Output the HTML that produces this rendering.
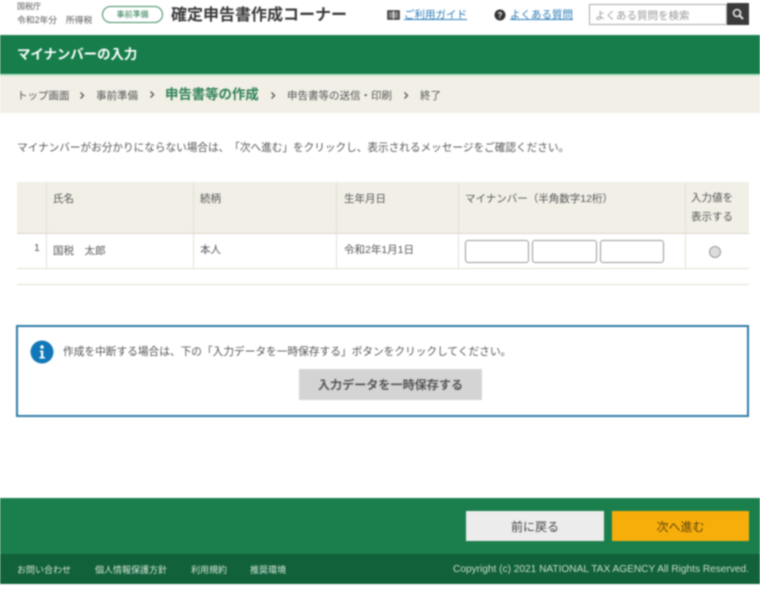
<!DOCTYPE html>
<html lang="ja">
<head>
<meta charset="utf-8">
<title>マイナンバーの入力</title>
<style>
html,body{margin:0;padding:0;background:#fff}
#p{position:relative;width:760px;height:591px;overflow:hidden;background:#fff;font-family:"Liberation Sans","Noto Sans CJK JP",sans-serif;color:#444;filter:blur(.9px);text-spacing-trim:space-all}
#p div{position:absolute;white-space:nowrap}
#p svg{position:absolute}
.t{line-height:1}
.b{background:#e3e0d6}
.c{fill:none;stroke:#555;stroke-width:1.300}
</style>
</head>
<body>
<div id="p">
<!-- header -->
<div class="t" style="left:17px;top:3px;font-size:8px;color:#555">国税庁</div>
<div class="t" style="left:17px;top:16px;font-size:8.800px;color:#555">令和2年分　所得税</div>
<div class="t" style="left:102px;top:6px;width:59px;height:15px;border:1px solid #3d8a60;border-radius:9px;text-align:center;font-size:8px;line-height:15px;color:#2a7a50">事前準備</div>
<div class="t" style="left:171px;top:8px;font-size:16px;font-weight:700;color:#3a3a3a">確定申告書作成コーナー</div>
<svg style="left:387px;top:10px" width="13" height="11" viewBox="0 0 13 11"><path d="M1 1h11v8H1z" fill="#888" stroke="#333" stroke-width="1.500"/><path d="M6.500 1v8" stroke="#fff" stroke-width="1"/></svg>
<div class="t" style="left:404px;top:10px;font-size:10.500px;color:#2b7cb8;text-decoration:underline">ご利用ガイド</div>
<svg style="left:494px;top:9px" width="12" height="12" viewBox="0 0 12 12"><circle cx="6" cy="6" r="5.500" fill="#333"/><text x="6" y="9" font-size="8" font-weight="700" text-anchor="middle" fill="#fff" font-family="Liberation Sans">?</text></svg>
<div class="t" style="left:510px;top:10px;font-size:10.500px;color:#2b7cb8;text-decoration:underline">よくある質問</div>
<div class="t" style="left:589px;top:4px;width:136px;height:19px;border:1px solid #aaa;background:#fff;font-size:10.500px;line-height:22px;color:#999;text-indent:5px">よくある質問を検索</div>
<div style="left:727px;top:3px;width:22px;height:22px;background:#3a3a3a"></div>
<svg style="left:731px;top:7px" width="14" height="14" viewBox="0 0 14 14"><circle cx="6" cy="6" r="3.500" fill="none" stroke="#e8e8e8" stroke-width="1.600"/><path d="M8.600 8.600L12 12" stroke="#e8e8e8" stroke-width="2"/></svg>

<!-- title band -->
<div style="left:0;top:35px;width:760px;height:40px;background:#177e4b"></div>
<div style="left:0;top:74px;width:760px;height:2px;background:#bfe6cb"></div>
<div class="t" style="left:17px;top:48px;font-size:13.400px;font-weight:700;color:#fff">マイナンバーの入力</div>

<!-- breadcrumb -->
<div style="left:0;top:76px;width:760px;height:37px;background:#f1efe6"></div>
<div class="t" style="left:17px;top:91px;font-size:10.500px;color:#555">トップ画面</div>
<svg style="left:79px;top:91px" width="6" height="9" viewBox="0 0 6 9"><path class="c" d="M1.500 1.500L4.500 4.500L1.500 7.500"/></svg>
<div class="t" style="left:96px;top:91px;font-size:10.500px;color:#555">事前準備</div>
<svg style="left:149px;top:90px" width="6" height="9" viewBox="0 0 6 9"><path class="c" d="M1.500 1.500L4.500 4.500L1.500 7.500"/></svg>
<div class="t" style="left:165px;top:88px;font-size:13.400px;font-weight:700;color:#2f8258">申告書等の作成</div>
<svg style="left:270px;top:91px" width="6" height="9" viewBox="0 0 6 9"><path class="c" d="M1.500 1.500L4.500 4.500L1.500 7.500"/></svg>
<div class="t" style="left:287px;top:91px;font-size:10.500px;color:#555">申告書等の送信・印刷</div>
<svg style="left:403px;top:91px" width="6" height="9" viewBox="0 0 6 9"><path class="c" d="M1.500 1.500L4.500 4.500L1.500 7.500"/></svg>
<div class="t" style="left:420px;top:91px;font-size:10.500px;color:#555">終了</div>

<!-- lead -->
<div class="t" style="left:17px;top:143px;font-size:10.640px;color:#555">マイナンバーがお分かりにならない場合は、「次へ進む」をクリックし、表示されるメッセージをご確認ください。</div>

<!-- table -->
<div style="left:17px;top:182px;width:732px;height:51px;background:#f1efe6"></div>
<div style="left:17px;top:233px;width:732px;height:1px;background:#d9d7cc"></div>
<div class="b" style="left:17px;top:268px;width:732px;height:1px"></div>
<div class="b" style="left:17px;top:284px;width:732px;height:1px"></div>
<div class="b" style="left:46px;top:182px;width:1px;height:87px"></div>
<div class="b" style="left:193px;top:182px;width:1px;height:87px"></div>
<div class="b" style="left:336px;top:182px;width:1px;height:87px"></div>
<div class="b" style="left:458px;top:182px;width:1px;height:87px"></div>
<div class="b" style="left:685px;top:182px;width:1px;height:87px"></div>
<div class="t" style="left:53px;top:194px;font-size:10.500px;color:#555">氏名</div>
<div class="t" style="left:200px;top:194px;font-size:10.500px;color:#555">続柄</div>
<div class="t" style="left:344px;top:194px;font-size:10.500px;color:#555">生年月日</div>
<div class="t" style="left:465px;top:194px;font-size:10.500px;color:#555">マイナンバー（半角数字12桁）</div>
<div class="t" style="left:691px;top:193px;font-size:10.500px;color:#555">入力値を</div>
<div class="t" style="left:691px;top:212px;font-size:10.500px;color:#555">表示する</div>
<div class="t" style="left:34px;top:243px;font-size:10.500px;color:#555">1</div>
<div class="t" style="left:53px;top:246px;font-size:10.500px;color:#555">国税　太郎</div>
<div class="t" style="left:200px;top:245px;font-size:10.500px;color:#555">本人</div>
<div class="t" style="left:344px;top:245px;font-size:10.500px;color:#555">令和2年1月1日</div>
<div style="left:465px;top:240px;width:62px;height:21px;border:1px solid #999;border-radius:3px;background:#fff"></div>
<div style="left:532px;top:240px;width:63px;height:21px;border:1px solid #999;border-radius:3px;background:#fff"></div>
<div style="left:600px;top:240px;width:62px;height:21px;border:1px solid #999;border-radius:3px;background:#fff"></div>
<div style="left:709px;top:246px;width:10px;height:10px;border:1px solid #999;border-radius:50%;background:#ddd"></div>

<!-- info box -->
<div style="left:16px;top:325px;width:729px;height:88px;border:2px solid #2e7ba6;background:#fff"></div>
<svg style="left:30px;top:340px" width="24" height="24" viewBox="0 0 24 24"><circle cx="12" cy="12" r="11.500" fill="#1277b8"/><circle cx="12" cy="7" r="1.800" fill="#fff"/><path d="M10 10.500h3.200v6.500H15v1.500H9.500V17h1.500v-5H10z" fill="#fff"/></svg>
<div class="t" style="left:63px;top:347px;font-size:10.700px;color:#555">作成を中断する場合は、下の「入力データを一時保存する」ボタンをクリックしてください。</div>
<div class="t" style="left:299px;top:369px;width:183px;height:31px;background:#d4d4d4;text-align:center;font-size:12.100px;line-height:33px;font-weight:700;color:#555">入力データを一時保存する</div>

<!-- footer -->
<div style="left:0;top:498px;width:760px;height:56px;background:#1a7f4c"></div>
<div style="left:0;top:554px;width:760px;height:30px;background:#11613a"></div>
<div class="t" style="left:466px;top:511px;width:138px;height:30px;background:#ececec;text-align:center;font-size:12px;line-height:32px;color:#444">前に戻る</div>
<div class="t" style="left:612px;top:511px;width:137px;height:30px;background:#f8ae0a;text-align:center;font-size:12px;line-height:32px;color:#5a4410">次へ進む</div>
<div class="t" style="left:17px;top:566px;font-size:9px;color:#d6e6dc">お問い合わせ</div>
<div class="t" style="left:95px;top:566px;font-size:9px;color:#d6e6dc">個人情報保護方針</div>
<div class="t" style="left:191px;top:566px;font-size:9px;color:#d6e6dc">利用規約</div>
<div class="t" style="left:250px;top:566px;font-size:9px;color:#d6e6dc">推奨環境</div>
<div class="t" style="right:11px;top:565px;font-size:10.150px;color:#c8dccf">Copyright (c) 2021 NATIONAL TAX AGENCY All Rights Reserved.</div>
</div>
</body>
</html>
